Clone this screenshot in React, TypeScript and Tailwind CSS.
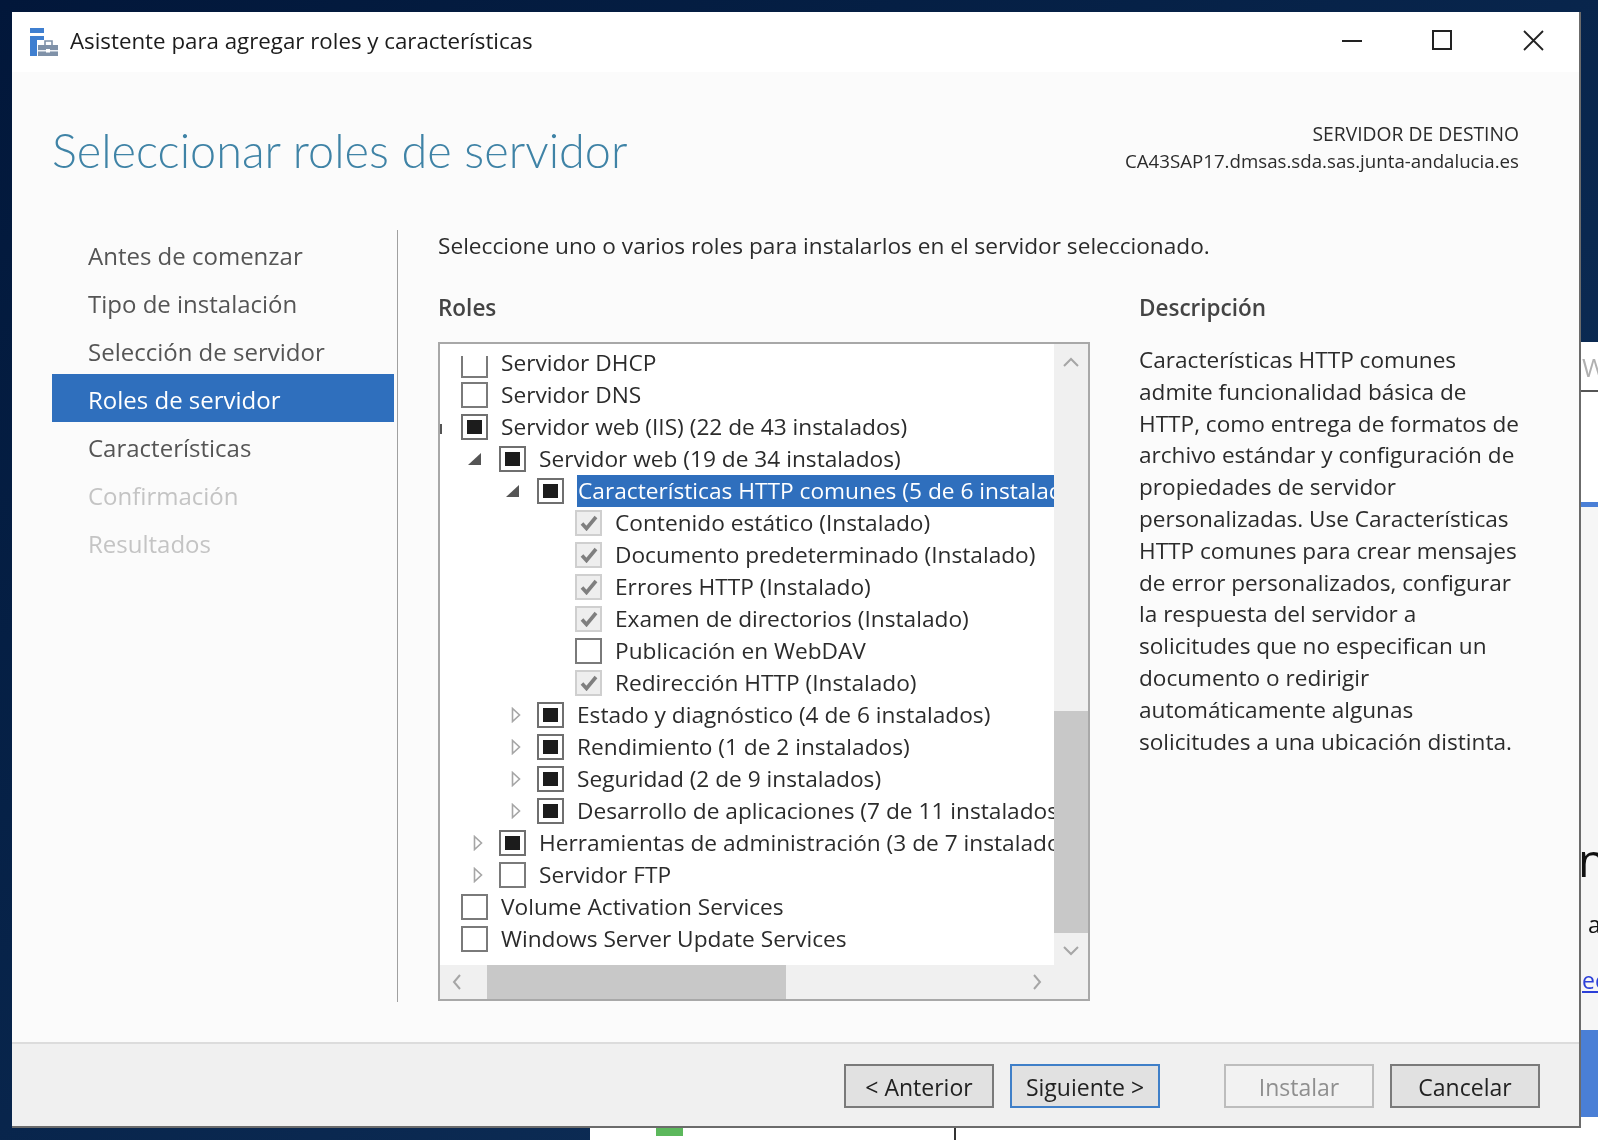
const font = "font-['Open_Sans','Noto_Sans',sans-serif]";

type Mark = "empty" | "mixed" | "checked";
type Arrow = "open" | "closed" | null;

const rows: { level: number; mark: Mark; arrow: Arrow; text: string }[] = [
  { level: 0, mark: "empty", arrow: null, text: "Servidor DHCP" },
  { level: 0, mark: "empty", arrow: null, text: "Servidor DNS" },
  { level: 0, mark: "mixed", arrow: null, text: "Servidor web (IIS) (22 de 43 instalados)" },
  { level: 1, mark: "mixed", arrow: "open", text: "Servidor web (19 de 34 instalados)" },
  { level: 2, mark: "mixed", arrow: "open", text: "Características HTTP comunes (5 de 6 instalados)" },
  { level: 3, mark: "checked", arrow: null, text: "Contenido estático (Instalado)" },
  { level: 3, mark: "checked", arrow: null, text: "Documento predeterminado (Instalado)" },
  { level: 3, mark: "checked", arrow: null, text: "Errores HTTP (Instalado)" },
  { level: 3, mark: "checked", arrow: null, text: "Examen de directorios (Instalado)" },
  { level: 3, mark: "empty", arrow: null, text: "Publicación en WebDAV" },
  { level: 3, mark: "checked", arrow: null, text: "Redirección HTTP (Instalado)" },
  { level: 2, mark: "mixed", arrow: "closed", text: "Estado y diagnóstico (4 de 6 instalados)" },
  { level: 2, mark: "mixed", arrow: "closed", text: "Rendimiento (1 de 2 instalados)" },
  { level: 2, mark: "mixed", arrow: "closed", text: "Seguridad (2 de 9 instalados)" },
  { level: 2, mark: "mixed", arrow: "closed", text: "Desarrollo de aplicaciones (7 de 11 instalados)" },
  { level: 1, mark: "mixed", arrow: "closed", text: "Herramientas de administración (3 de 7 instalados)" },
  { level: 1, mark: "empty", arrow: "closed", text: "Servidor FTP" },
  { level: 0, mark: "empty", arrow: null, text: "Volume Activation Services" },
  { level: 0, mark: "empty", arrow: null, text: "Windows Server Update Services" },
];

const indents = ["w-0", "w-[38px]", "w-[76px]", "w-[114px]"];

const descriptionLines = [
  "Características HTTP comunes",
  "admite funcionalidad básica de",
  "HTTP, como entrega de formatos de",
  "archivo estándar y configuración de",
  "propiedades de servidor",
  "personalizadas. Use Características",
  "HTTP comunes para crear mensajes",
  "de error personalizados, configurar",
  "la respuesta del servidor a",
  "solicitudes que no especifican un",
  "documento o redirigir",
  "automáticamente algunas",
  "solicitudes a una ubicación distinta.",
];

const navItems = [
  { label: "Antes de comenzar", tone: "text-[#555555]" },
  { label: "Tipo de instalación", tone: "text-[#555555]" },
  { label: "Selección de servidor", tone: "text-[#555555]" },
  { label: "Roles de servidor", tone: "bg-[#2f6fbd] text-white" },
  { label: "Características", tone: "text-[#555555]" },
  { label: "Confirmación", tone: "text-[#c4c4c4]" },
  { label: "Resultados", tone: "text-[#c4c4c4]" },
];

const WizardIcon = () => (
  <svg width="28" height="28" viewBox="0 0 28 28" className="shrink-0">
    <rect x="0" y="0" width="14" height="5" fill="#3f7fd0" />
    <path d="M0 8h14v4H7v16H0z" fill="#3f7fd0" />
    <path d="M15 17v-4h7v4" fill="none" stroke="#7f91a8" strokeWidth="1.6" />
    <rect x="8" y="17" width="20" height="11" fill="#7f91a8" />
    <rect x="8" y="22" width="20" height="1.5" fill="#eef1f5" />
    <rect x="16" y="21" width="4" height="3.5" fill="#ffffff" />
  </svg>
);

const TreeArrow = ({ kind }: { kind: Arrow }) => {
  if (kind === "open")
    return (
      <svg width="13" height="12" viewBox="0 0 13 12" className="mr-[18px]">
        <path d="M13 0v12H0z" fill="#555555" />
      </svg>
    );
  if (kind === "closed")
    return (
      <svg width="10" height="16" viewBox="0 0 10 16" className="mr-[16px]">
        <path d="M1.5 1.5v13L8.5 8z" fill="none" stroke="#a6a6a6" strokeWidth="1.6" />
      </svg>
    );
  return null;
};

const CheckBox = ({ mark, cut }: { mark: Mark; cut?: boolean }) => {
  if (mark === "checked")
    return (
      <span className="flex h-[26px] w-[27px] shrink-0 items-center justify-center border-2 border-[#cfcfcf] bg-[#eeeeee]">
        <svg width="18" height="16" viewBox="0 0 18 16">
          <path d="M2 8.5l4.5 5L16 2" fill="none" stroke="#7f7f7f" strokeWidth="3.6" />
        </svg>
      </span>
    );
  if (mark === "mixed")
    return (
      <span className="flex h-[26px] w-[27px] shrink-0 items-center justify-center border-2 border-[#6f6f6f] bg-white">
        <span className="h-[14px] w-[15px] bg-[#1c1c1c]" />
      </span>
    );
  return (
    <span
      className={
        cut
          ? "mt-[8px] h-[22px] w-[27px] shrink-0 border-2 border-t-0 border-[#7a7a7a] bg-white"
          : "h-[26px] w-[27px] shrink-0 border-2 border-[#7a7a7a] bg-white"
      }
    />
  );
};

const TreeRow = ({ row, index }: { row: (typeof rows)[number]; index: number }) => {
  const selected = index === 4;
  return (
    <div className="flex h-8 items-center whitespace-nowrap pl-[21px]">
      <span className={`flex shrink-0 items-center justify-end ${indents[row.level]}`}>
        <TreeArrow kind={row.arrow} />
      </span>
      <CheckBox mark={row.mark} cut={index === 0} />
      <span
        className={
          selected
            ? "ml-[13px] flex h-8 flex-1 items-center bg-[#2f6fbd] pl-px text-white"
            : "ml-[13px] text-[#2b2b2b]"
        }
      >
        {row.text}
      </span>
    </div>
  );
};

const TreeList = () => (
  <div className="flex h-[659px] w-[652px] shrink-0 flex-col border-2 border-[#a8a8a8] bg-white text-[22.7px]">
    <div className="flex min-h-0 flex-1">
      <div className="relative w-[614px] shrink-0 overflow-hidden pt-[3px]">
        <span className="absolute left-0 top-[80px] h-[10px] w-[2px] bg-[#555555]" />
        {rows.map((row, i) => (
          <TreeRow key={row.text} row={row} index={i} />
        ))}
      </div>
      <div className="flex flex-1 flex-col items-center bg-[#f0f0f0]">
        <svg width="16" height="10" viewBox="0 0 16 10" className="mt-[13px] shrink-0">
          <path d="M1 9l7-7 7 7" fill="none" stroke="#a6a6a6" strokeWidth="2" />
        </svg>
        <div className="mt-[344px] h-[222px] w-full bg-[#c8c8c8]" />
        <svg width="16" height="10" viewBox="0 0 16 10" className="mt-[13px] shrink-0">
          <path d="M1 1l7 7 7-7" fill="none" stroke="#a6a6a6" strokeWidth="2" />
        </svg>
      </div>
    </div>
    <div className="flex h-[34px] shrink-0 items-center bg-[#f0f0f0]">
      <svg width="10" height="16" viewBox="0 0 10 16" className="ml-3 shrink-0">
        <path d="M8 1L2 8l6 7" fill="none" stroke="#a6a6a6" strokeWidth="2" />
      </svg>
      <div className="ml-[25px] h-full w-[299px] bg-[#c8c8c8]" />
      <svg width="10" height="16" viewBox="0 0 10 16" className="ml-[246px] shrink-0">
        <path d="M2 1l6 7-6 7" fill="none" stroke="#a6a6a6" strokeWidth="2" />
      </svg>
    </div>
  </div>
);

const FooterButton = ({
  label,
  tone,
  className = "",
}: {
  label: string;
  tone: string;
  className?: string;
}) => (
  <div
    className={`flex h-[44px] w-[150px] items-center justify-center border-2 pt-[2px] text-[23px] ${tone} ${className}`}
  >
    {label}
  </div>
);

const Wizard = () => (
  <div
    className={`absolute left-3 top-3 flex h-[1116px] w-[1569px] flex-col border-b-2 border-r-2 border-[#6b6b6b] bg-[#fbfbfb] ${font}`}
  >
    <div className="flex h-[60px] shrink-0 items-center bg-white pl-[18px]">
      <WizardIcon />
      <span className="mb-[2px] ml-[12px] text-[22.3px] text-[#1c1c1c]">
        Asistente para agregar roles y características
      </span>
      <div className="mb-1 ml-auto flex items-center">
        <span className="mr-[70px] mt-[2px] h-[2px] w-5 bg-[#222222]" />
        <span className="mr-[71px] h-5 w-5 border-2 border-[#222222]" />
        <svg width="21" height="21" viewBox="0 0 21 21" className="mr-[35px]">
          <path d="M1 1l19 19M20 1L1 20" fill="none" stroke="#222222" strokeWidth="1.8" />
        </svg>
      </div>
    </div>

    <div className="flex h-[158px] shrink-0 items-start justify-between pl-[40px] pr-[60px]">
      <h1 className="mt-[46px] font-['Lato'] text-[46.8px] font-light leading-[64px] text-[#3f83a6]">
        Seleccionar roles de servidor
      </h1>
      <div className="mt-[48px] text-right text-[18.7px] leading-[27px] text-[#2b2b2b]">
        <div className="text-[19.3px]">SERVIDOR DE DESTINO</div>
        <div>CA43SAP17.dmsas.sda.sas.junta-andalucia.es</div>
      </div>
    </div>

    <div className="flex h-[772px] shrink-0 pl-[40px]">
      <nav className="flex w-[342px] shrink-0 flex-col text-[24px]">
        {navItems.map((item) => (
          <div key={item.label} className={`flex h-12 items-center pl-[36px] pt-[3px] ${item.tone}`}>
            {item.label}
          </div>
        ))}
      </nav>
      <div className="ml-[3px] w-px shrink-0 bg-[#a0a0a0]" />
      <div className="flex flex-1 flex-col pl-[40px]">
        <div className="flex h-8 shrink-0 items-center text-[22.65px] text-[#2b2b2b]">
          Seleccione uno o varios roles para instalarlos en el servidor seleccionado.
        </div>
        <div className="mt-[28px] flex min-h-0 flex-1">
          <div className="flex flex-col">
            <h2 className="h-[52px] shrink-0 pt-[2px] text-[22.5px] font-semibold leading-8 text-[#444444]">
              Roles
            </h2>
            <TreeList />
          </div>
          <div className="ml-[49px] flex flex-col">
            <h2 className="h-[52px] shrink-0 pt-[2px] text-[22.5px] font-semibold leading-8 text-[#444444]">
              Descripción
            </h2>
            <div className="pt-[2px] text-[22.6px] leading-[31.8px] text-[#2b2b2b]">
              {descriptionLines.map((line) => (
                <div key={line} className="whitespace-nowrap">
                  {line}
                </div>
              ))}
            </div>
          </div>
        </div>
      </div>
    </div>

    <div className="mt-auto flex h-[84px] shrink-0 justify-end gap-4 border-t-2 border-[#dcdcdc] bg-[#f0f0f0] pr-[39px] pt-[20px]">
      <FooterButton label="< Anterior" tone="border-[#7a7a7a] bg-[#e1e1e1] text-[#222222]" />
      <FooterButton label="Siguiente >" tone="border-[#3f7fc8] bg-[#e1e1e1] text-[#222222]" />
      <FooterButton
        label="Instalar"
        tone="border-[#bdbdbd] bg-[#f2f2f2] text-[#8f8f8f]"
        className="ml-[48px]"
      />
      <FooterButton label="Cancelar" tone="border-[#7a7a7a] bg-[#e1e1e1] text-[#222222]" />
    </div>
  </div>
);

// the window sitting behind the wizard, only its edges show
const BackWindow = () => (
  <div className="absolute bottom-0 left-[590px] right-0 top-[342px] flex flex-col overflow-hidden bg-white font-['Open_Sans',sans-serif]">
    <div className="flex h-[50px] shrink-0 justify-end border-b-2 border-[#555555] text-[26px] text-[#b0b0b0]">
      <span className="mt-[12px] w-[16px] whitespace-nowrap leading-none">W</span>
    </div>
    <div className="mt-[110px] h-[5px] shrink-0 bg-[#4a7fd6]" />
    <div className="flex h-[523px] shrink-0 flex-col items-end bg-[#f6f6f6] text-[#111111]">
      <span className="mt-[322px] w-[20px] whitespace-nowrap text-[46px] leading-[60px]">n</span>
      <span className="mt-[20px] w-[30px] whitespace-nowrap text-[23px] leading-[30px]">u a</span>
      <span className="mt-[26px] w-[16px] whitespace-nowrap text-[23px] leading-[30px] text-[#2b3fd8] underline">
        ee
      </span>
    </div>
    <div className="h-[87px] shrink-0 bg-[#4a7fd6]" />
    <div className="absolute bottom-[4px] left-[66px] h-[8px] w-[27px] bg-[#5cb85c]" />
    <div className="absolute bottom-0 left-[364px] h-[12px] w-[2px] bg-[#333333]" />
  </div>
);

export default function App() {
  return (
    <div className="relative h-[1140px] w-[1598px] overflow-hidden bg-gradient-to-br from-[#02173a] to-[#12345f] blur-[0.5px]">
      <BackWindow />
      <Wizard />
    </div>
  );
}
